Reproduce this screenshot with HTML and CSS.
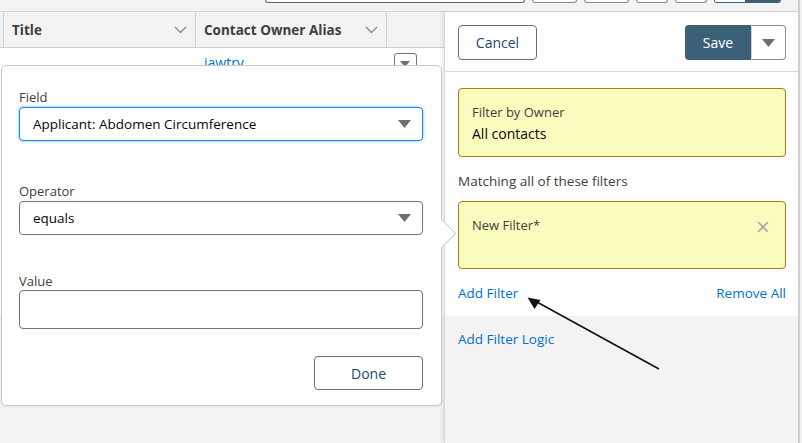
FILE: index.html
```html
<!DOCTYPE html>
<html>
<head>
<meta charset="utf-8">
<link rel="stylesheet" href="styles.css">
</head>
<body>
<div class="page">
  <div class="app">
    <div class="topbar">
      <div class="tb search"></div>
      <div class="tb w45"></div>
      <div class="tb w45"></div>
      <div class="tb w32"></div>
      <div class="tb w32"></div>
      <div class="tb split"><span class="split-a"></span><span class="split-b"></span></div>
    </div>
    <div class="content">
      <div class="table">
        <div class="thead">
          <div class="th th-edge"></div>
          <div class="th th-title"><span class="th-label">Title</span><svg class="chev" width="13" height="8" viewBox="0 0 13 8"><path d="M1 1 L6.5 6.5 L12 1" fill="none" stroke="#8a8886" stroke-width="1.4"/></svg></div>
          <div class="th th-alias"><span class="th-label">Contact Owner Alias</span><svg class="chev" width="13" height="8" viewBox="0 0 13 8"><path d="M1 1 L6.5 6.5 L12 1" fill="none" stroke="#8a8886" stroke-width="1.4"/></svg></div>
          <div class="th th-rest"></div>
        </div>
        <div class="tbody">
          <div class="trow">
            <a class="alias-link">jawtry</a>
            <span class="row-menu"><svg width="10" height="6" viewBox="0 0 10 6"><path d="M0 0 L10 0 L5 6 Z" fill="#706e6b"/></svg></span>
          </div>
        </div>
      </div>
      <div class="panel">
        <div class="panel-head">
          <button class="btn btn-cancel">Cancel</button>
          <div class="save-group">
            <button class="btn-save">Save</button>
            <button class="btn-drop"><svg width="13" height="8" viewBox="0 0 13 8"><path d="M0 0 L13 0 L6.5 8 Z" fill="#706e6b"/></svg></button>
          </div>
        </div>
        <div class="panel-body">
          <div class="fbox owner">
            <div class="fbox-label">Filter by Owner</div>
            <div class="fbox-value">All contacts</div>
          </div>
          <div class="matching">Matching all of these filters</div>
          <div class="fbox newf">
            <div class="fbox-label">New Filter*</div>
            <svg class="close" width="12" height="12" viewBox="0 0 12 12"><path d="M1 1 L11 11 M11 1 L1 11" stroke="#a8a8a8" stroke-width="1.6"/></svg>
          </div>
          <div class="links">
            <a class="link">Add Filter</a>
            <a class="link">Remove All</a>
          </div>
        </div>
        <div class="panel-foot">
          <a class="link">Add Filter Logic</a>
        </div>
      </div>
    </div>
  </div>
  <div class="edge"></div>
  <div class="gutter"></div>

  <div class="popover">
    <div class="nub"></div>
    <label class="plabel first">Field</label>
    <div class="select focus"><span>Applicant: Abdomen Circumference</span><svg width="13" height="8" viewBox="0 0 13 8"><path d="M0 0 L13 0 L6.5 8 Z" fill="#706e6b"/></svg></div>
    <label class="plabel op">Operator</label>
    <div class="select"><span>equals</span><svg width="13" height="8" viewBox="0 0 13 8"><path d="M0 0 L13 0 L6.5 8 Z" fill="#706e6b"/></svg></div>
    <label class="plabel val">Value</label>
    <div class="input"></div>
    <div class="done-row"><button class="btn btn-done">Done</button></div>
  </div>

  <svg class="arrow" width="802" height="443" viewBox="0 0 802 443">
    <line x1="659" y1="369" x2="536" y2="301.5" stroke="#111" stroke-width="1.6"/>
    <polygon points="527.5,297.5 540.5,300 534.5,309" fill="#111"/>
  </svg>
</div>
</body>
</html>
```
FILE: styles.css
```css
* { box-sizing: border-box; }
html, body { margin: 0; padding: 0; }
body {
  font-family: "Open Sans", "Noto Sans", sans-serif;
  color: #3e3e3c;
  background: #f3f3f3;
}
.page {
  position: relative;
  width: 802px;
  height: 443px;
  overflow: hidden;
  display: flex;
}
.app { width: 798px; display: flex; flex-direction: column; }
.edge { width: 2px; background: #cfcfcf; }
.gutter { width: 2px; background: #f0f0f0; }

.topbar {
  height: 12px;
  border-bottom: 1px solid #d6d6d6;
  background: #f3f3f3;
  display: flex;
  gap: 7px;
  align-items: flex-start;
}
.tb {
  height: 3px;
  border: 1px solid #8a8a8a;
  border-top: none;
  border-radius: 0 0 4px 4px;
  background: #fff;
}
.search { margin-left: 265px; width: 260px; border-color: #666; }
.w45 { width: 45px; }
.w32 { width: 32px; }
.split { width: 67px; display: flex; overflow: hidden; border-color: #3b6178; }
.split-a { flex: 1; background: #fff; }
.split-b { width: 35px; background: #3b6178; }

.content { flex: 1; display: flex; }
.table { width: 444px; display: flex; flex-direction: column; }
.thead {
  height: 36px;
  display: flex;
  background: #f3f3f3;
  border-bottom: 1px solid #cfcfcf;
}
.th { display: flex; align-items: center; border-right: 1px solid #d4d4d4; }
.th-edge { width: 4px; }
.th-title { width: 192px; padding: 0 8px 0 8px; justify-content: space-between; }
.th-alias { width: 191px; padding: 0 8px 0 8px; justify-content: space-between; }
.th-rest { flex: 1; border-right: none; }
.th-label { font-weight: 700; font-size: 13.5px; color: #3e3e3c; }
.chev { display: block; }

.tbody { flex: 1; background: #f3f3f3; }
.trow {
  height: 268px;
  background: #fff;
  position: relative;
  display: flex;
  align-items: flex-start;
  padding: 5px 0 0 204px;
}
.alias-link { color: #0070d2; font-size: 14px; line-height: 20px; }
.row-menu {
  margin-left: 150px;
  width: 23px;
  height: 22px;
  border: 1px solid #747474;
  border-radius: 3px;
  background: #fff;
  display: flex;
  justify-content: center;
  align-items: center;
}

.panel {
  flex: 1;
  background: #fff;
  display: flex;
  flex-direction: column;
  border-left: 1px solid #d8d8d8;
  box-shadow: -2px 0 3px rgba(0,0,0,0.08);
  position: relative;
}
.panel-head {
  height: 60px;
  padding: 13px 12px 0 13px;
  border-bottom: 1px solid #d8d8d8;
  display: flex;
  justify-content: space-between;
  align-items: flex-start;
}
.btn {
  font-family: inherit;
  font-size: 14px;
  background: #fff;
  border: 1px solid #706e6b;
  border-radius: 4px;
  color: #22496e;
  cursor: pointer;
}
.btn-cancel { width: 79px; height: 35px; }
.save-group { display: flex; height: 35px; }
.btn-save {
  width: 66px;
  height: 35px;
  border: none;
  border-radius: 4px 0 0 4px;
  background: #3b6178;
  color: #fff;
  font-family: inherit;
  font-size: 14px;
}
.btn-drop {
  width: 35px;
  height: 35px;
  border: 1px solid #8e8e8e;
  border-left: 1px solid #d0d0d0;
  border-radius: 0 4px 4px 0;
  background: #fff;
  display: flex;
  justify-content: center;
  align-items: center;
  padding: 0;
}
.panel-body {
  padding: 16px 12px 0 13px;
  height: 244px;
}
.fbox {
  background: #fafcbe;
  border: 1px solid #b5731a;
  border-radius: 4px;
  padding: 14px 13px 0 13px;
  position: relative;
}
.owner { height: 69px; }
.newf { height: 68px; padding-top: 14px; }
.fbox-label { font-size: 13px; color: #3e3e3c; line-height: 18px; }
.fbox-value { font-size: 14px; color: #080707; line-height: 20px; margin-top: 3px; }
.close { position: absolute; right: 16px; top: 19px; }
.matching { font-size: 13.5px; line-height: 20px; margin: 14px 0 10px; color: #3e3e3c; }
.links { display: flex; justify-content: space-between; margin-top: 14px; }
.link { color: #0070d2; font-size: 13.5px; line-height: 20px; }
.panel-foot {
  flex: 1;
  background: #f3f3f3;
  padding: 11px 13px;
}

.popover {
  position: absolute;
  left: 1px;
  top: 65px;
  width: 441px;
  height: 341px;
  background: #fff;
  border: 1px solid #c9c9c9;
  border-radius: 5px;
  padding: 0 18px 0 17px;
  box-shadow: 0 1px 2px rgba(0,0,0,0.08);
}
.nub {
  position: absolute;
  right: -11px;
  top: 157px;
  width: 21px;
  height: 21px;
  background: #fff;
  border-top: 1px solid #c9c9c9;
  border-right: 1px solid #c9c9c9;
  transform: rotate(45deg);
}
.plabel { display: block; font-size: 13px; line-height: 18px; color: #3e3e3c; }
.plabel.first { margin-top: 22px; }
.plabel.op { margin-top: 41px; }
.plabel.val { margin-top: 37px; }
.select {
  margin-top: 1px;
  height: 34px;
  border: 1px solid #747474;
  border-radius: 4px;
  display: flex;
  align-items: center;
  justify-content: space-between;
  padding: 0 11px 0 13px;
  font-size: 13.5px;
  color: #080707;
}
.select.focus { border-color: #1589ee; box-shadow: 0 0 3px #63aef0; }
.input {
  height: 39px;
  border: 1px solid #747474;
  border-radius: 4px;
}
.done-row { display: flex; justify-content: flex-end; margin-top: 27px; }
.btn-done { width: 109px; height: 34px; }

.arrow { position: absolute; left: 0; top: 0; pointer-events: none; }
```
